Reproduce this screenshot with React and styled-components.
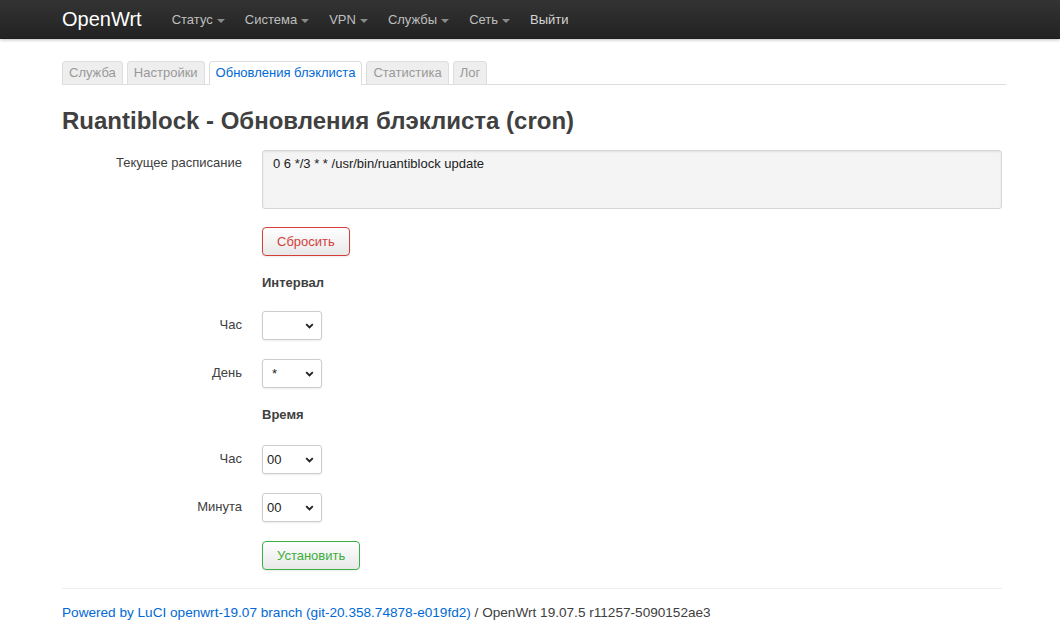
import styled, { createGlobalStyle } from "styled-components"

const GlobalStyle = createGlobalStyle`
    html, body{
        margin: 0;
        padding: 0;
        background-color: #fff;
    }
    body{
        font-family: "Liberation Sans", Arial, sans-serif;
        font-size: 13px;
        line-height: 18px;
        color: #404040;
    }
`

const Topbar = styled.header`
    height: 39px;
    background: linear-gradient(to bottom, #333333, #222222);
    box-shadow: 0 1px 3px rgba(0, 0, 0, 0.25), 0 -1px 0 rgba(0, 0, 0, 0.1) inset;
    display: flex;
    align-items: center;
    padding-left: 62px;
`

const Brand = styled.a`
    font-size: 20px;
    color: #ffffff;
    margin-right: 20px;
    text-decoration: none;
    line-height: 39px;
`

const NavList = styled.ul`
    display: flex;
    margin: 0;
    padding: 0;
    list-style: none;
`

const NavItem = styled.li`
    padding: 0 10px;
    font-size: 13px;
    color: ${p => (p.$bright ? "#d5d5d5" : "#bfbfbf")};
    display: flex;
    align-items: center;
    gap: 4px;
    line-height: 39px;
`

const Caret = styled.span`
    display: inline-block;
    width: 0;
    height: 0;
    border-left: 4px solid transparent;
    border-right: 4px solid transparent;
    border-top: 4px solid #8a8a8a;
    margin-top: 2px;
`

const Container = styled.main`
    width: 940px;
    margin: 0 0 0 62px;
    padding-top: 22px;
`

const Tabs = styled.ul`
    display: flex;
    gap: 4px;
    margin: 0;
    padding: 0;
    list-style: none;
    border-bottom: 1px solid #ddd;
    width: 944px;
`

const Tab = styled.li`
    padding: 0 6px;
    line-height: 22px;
    border: 1px solid #ddd;
    border-bottom: none;
    border-radius: 4px 4px 0 0;
    background-color: ${p => (p.$active ? "#fff" : "#eee")};
    color: ${p => (p.$active ? "#0069d6" : "#999")};
    margin-bottom: ${p => (p.$active ? "-1px" : "0")};
    padding-bottom: ${p => (p.$active ? "1px" : "0")};
`

const Title = styled.h2`
    font-size: 24px;
    font-weight: bold;
    line-height: 36px;
    margin: 18px 0 11px;
    color: #404040;
`

const Row = styled.div`
    display: grid;
    grid-template-columns: 180px 1fr;
    column-gap: 20px;
    margin-bottom: ${p => p.$gap || "19px"};
`

const Label = styled.label`
    text-align: right;
    padding-top: ${p => p.$top || "5px"};
`

const Field = styled.div`
    grid-column: 2;
    display: flex;
    align-items: flex-start;
`

const ScheduleBox = styled.div`
    width: 100%;
    height: 59px;
    box-sizing: border-box;
    padding: 4px 10px;
    background-color: #f4f4f4;
    border: 1px solid #d6d6d6;
    border-radius: 3px;
    box-shadow: inset 0 1px 2px rgba(0, 0, 0, 0.08);
    color: #222;
`

const Button = styled.button`
    font-family: inherit;
    font-size: 13px;
    height: 29px;
    padding: 0 14px;
    border-radius: 4px;
    border: 1px solid ${p => (p.$kind === "reset" ? "#d43f3a" : "#3cb043")};
    color: ${p => (p.$kind === "reset" ? "#d43f3a" : "#3cae3a")};
    background: linear-gradient(to bottom, #ffffff, #e8e8e8);
    box-shadow: 0 1px 2px rgba(0, 0, 0, 0.08);
    cursor: pointer;
`

const SectionTitle = styled.h4`
    font-size: 13px;
    font-weight: bold;
    margin: 0;
    line-height: 18px;
    color: #404040;
`

const Select = styled.div`
    width: 60px;
    height: 29px;
    box-sizing: border-box;
    border: 1px solid #ccc;
    border-radius: 3px;
    box-shadow: 0 1px 2px rgba(0, 0, 0, 0.08);
    background-color: #fff;
    display: flex;
    align-items: center;
    justify-content: space-between;
    padding: 0 7px 0 ${p => (p.$star ? "9px" : "4px")};
    font-size: 13px;
    color: #222;
`

const Hr = styled.hr`
    border: none;
    border-top: 1px solid #eee;
    margin: 0 0 15px;
`

const Footer = styled.footer`
    font-size: 13.6px;
    color: #404040;
    a{
        color: #0069d6;
        text-decoration: none;
    }
`

const Chevron = () => (
    <svg width="9" height="6" viewBox="0 0 9 6">
        <path d="M1.2 1.2 L4.5 4.5 L7.8 1.2" fill="none" stroke="#222" strokeWidth="1.9" />
    </svg>
)

const SelectBox = ({ value, star }) => (
    <Select $star={star}>
        <span>{value}</span>
        <Chevron />
    </Select>
)

const navItems = ["Статус", "Система", "VPN", "Службы", "Сеть"]
const tabs = ["Служба", "Настройки", "Обновления блэклиста", "Статистика", "Лог"]

const App = () => {
  return (
    <>
    <GlobalStyle />
    <Topbar>
        <Brand href="#">OpenWrt</Brand>
        <NavList>
            {navItems.map(n => (
                <NavItem key={n}>{n}<Caret /></NavItem>
            ))}
            <NavItem $bright>Выйти</NavItem>
        </NavList>
    </Topbar>
    <Container>
        <Tabs>
            {tabs.map(t => (
                <Tab key={t} $active={t === "Обновления блэклиста"}>{t}</Tab>
            ))}
        </Tabs>
        <Title>Ruantiblock - Обновления блэклиста (cron)</Title>

        <Row $gap="18px">
            <Label $top="4px">Текущее расписание</Label>
            <ScheduleBox>0 6 */3 * * /usr/bin/ruantiblock update</ScheduleBox>
        </Row>
        <Row $gap="18px">
            <Field><Button $kind="reset">Сбросить</Button></Field>
        </Row>
        <Row $gap="19px">
            <Field><SectionTitle>Интервал</SectionTitle></Field>
        </Row>
        <Row>
            <Label>Час</Label>
            <Field><SelectBox value="" /></Field>
        </Row>
        <Row $gap="18px">
            <Label>День</Label>
            <Field><SelectBox value="*" star /></Field>
        </Row>
        <Row $gap="21px">
            <Field><SectionTitle>Время</SectionTitle></Field>
        </Row>
        <Row>
            <Label>Час</Label>
            <Field><SelectBox value="00" /></Field>
        </Row>
        <Row>
            <Label>Минута</Label>
            <Field><SelectBox value="00" /></Field>
        </Row>
        <Row $gap="18px">
            <Field><Button $kind="apply">Установить</Button></Field>
        </Row>
        <Hr />
        <Footer>
            <a href="#">Powered by LuCI openwrt-19.07 branch (git-20.358.74878-e019fd2)</a> / OpenWrt 19.07.5 r11257-5090152ae3
        </Footer>
    </Container>
    </>
  )
}

export default App
